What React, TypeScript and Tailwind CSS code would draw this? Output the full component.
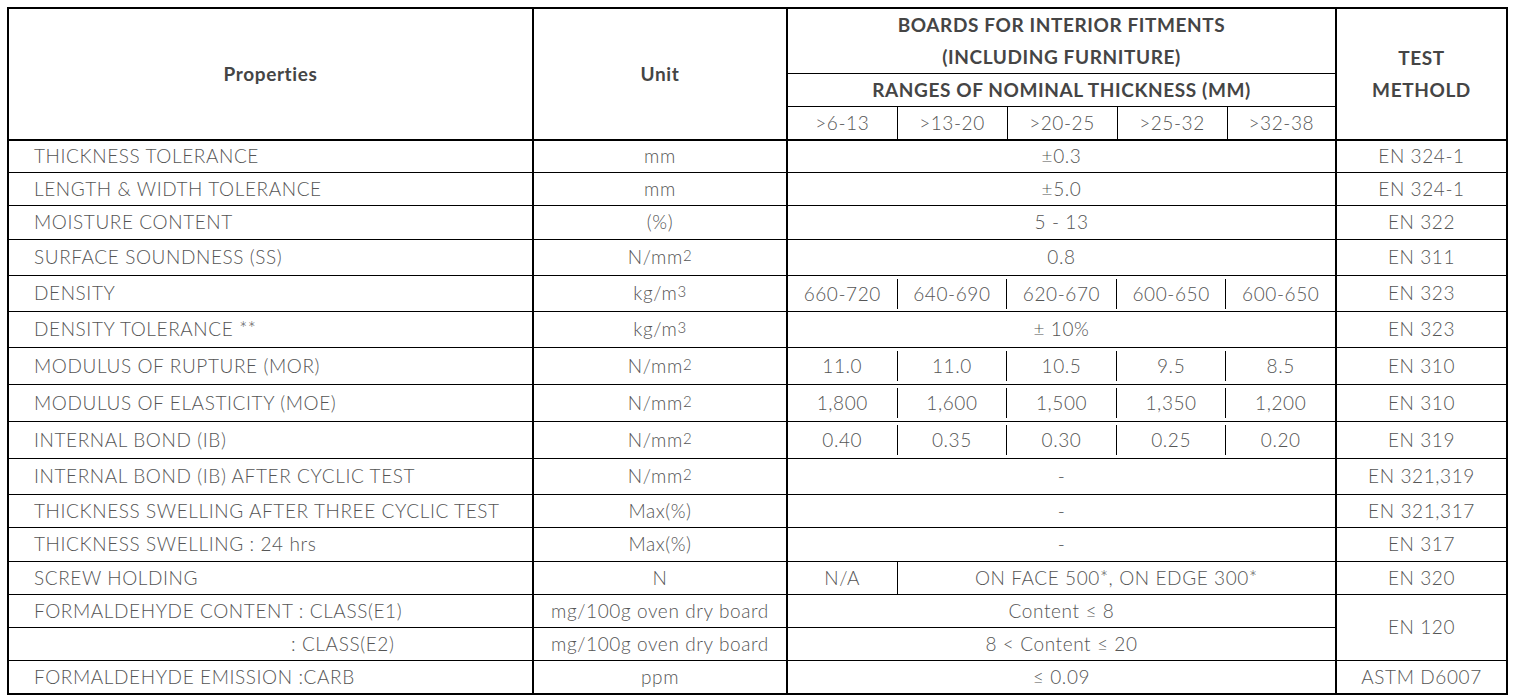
import React from 'react';

type Row = {
  name: string;
  unit: React.ReactNode;
  values: string[] | string;
  method?: string;
  h: number;
};

const N2 = (
  <>
    N/mm<sup className="text-[15px] relative -top-[3px]">2</sup>
  </>
);
const KG3 = (
  <>
    kg/m<sup className="text-[15px] relative -top-[3px]">3</sup>
  </>
);

const rows: Row[] = [
  { name: 'THICKNESS TOLERANCE', unit: 'mm', values: '±0.3', method: 'EN 324-1', h: 33 },
  { name: 'LENGTH & WIDTH TOLERANCE', unit: 'mm', values: '±5.0', method: 'EN 324-1', h: 33 },
  { name: 'MOISTURE CONTENT', unit: '(%)', values: '5 - 13', method: 'EN 322', h: 34 },
  { name: 'SURFACE SOUNDNESS (SS)', unit: N2, values: '0.8', method: 'EN 311', h: 36 },
  { name: 'DENSITY', unit: KG3, values: ['660-720', '640-690', '620-670', '600-650', '600-650'], method: 'EN 323', h: 36 },
  { name: 'DENSITY TOLERANCE **', unit: KG3, values: '± 10%', method: 'EN 323', h: 36 },
  { name: 'MODULUS OF RUPTURE (MOR)', unit: N2, values: ['11.0', '11.0', '10.5', '9.5', '8.5'], method: 'EN 310', h: 37 },
  { name: 'MODULUS OF ELASTICITY (MOE)', unit: N2, values: ['1,800', '1,600', '1,500', '1,350', '1,200'], method: 'EN 310', h: 37 },
  { name: 'INTERNAL BOND (IB)', unit: N2, values: ['0.40', '0.35', '0.30', '0.25', '0.20'], method: 'EN 319', h: 37 },
  { name: 'INTERNAL BOND (IB) AFTER CYCLIC TEST', unit: N2, values: '-', method: 'EN 321,319', h: 36 },
  { name: 'THICKNESS SWELLING AFTER THREE CYCLIC TEST', unit: 'Max(%)', values: '-', method: 'EN 321,317', h: 33 },
  { name: 'THICKNESS SWELLING : 24 hrs', unit: 'Max(%)', values: '-', method: 'EN 317', h: 34 },
];

const thick = 'border-2 border-black';

export default function App() {
  return (
    <div
      className="bg-white min-h-[698px] pt-[7px] pl-[7px] text-[#555] text-[19px] tracking-[0.6px]"
      style={{ fontFamily: 'Lato, "Open Sans", sans-serif' }}
    >
      <table className="border-collapse w-[1499px] table-fixed font-light">
        <colgroup>
          <col className="w-[525px]" />
          <col className="w-[254px]" />
          <col className="w-[110px]" />
          <col className="w-[110px]" />
          <col className="w-[110px]" />
          <col className="w-[110px]" />
          <col className="w-[109px]" />
          <col className="w-[171px]" />
        </colgroup>
        <thead className="font-bold text-[#454545] text-[19px]">
          <tr className="h-[61px]">
            <th rowSpan={3} className={`${thick} text-center font-bold`}>Properties</th>
            <th rowSpan={3} className={`${thick} text-center font-bold`}>Unit</th>
            <th colSpan={5} className={`${thick} border-b border-b-black leading-[32px] font-bold`}>
              BOARDS FOR INTERIOR FITMENTS
              <br />
              (INCLUDING FURNITURE)
            </th>
            <th rowSpan={3} className={`${thick} leading-[32px] font-bold`}>
              TEST
              <br />
              METHOLD
            </th>
          </tr>
          <tr className="h-[33px]">
            <th colSpan={5} className="border-x-2 border-x-black border-b border-b-black border-t border-t-black font-bold">
              RANGES OF NOMINAL THICKNESS (MM)
            </th>
          </tr>
          <tr className="h-[33px] text-[#555]">
            {['>6-13', '>13-20', '>20-25', '>25-32', '>32-38'].map((r, i) => (
              <th
                key={r}
                className={`font-light border-t border-t-black border-b-2 border-b-black ${
                  i === 0 ? 'border-l-2 border-l-black' : 'border-l border-l-black'
                } ${i === 4 ? 'border-r-2 border-r-black' : ''}`}
              >
                {r}
              </th>
            ))}
          </tr>
        </thead>
        <tbody>
          {rows.map((r) => (
            <tr key={r.name} style={{ height: r.h }} className="border-b border-black">
              <td className="border-l-2 border-l-black border-r-2 border-r-black pl-[25px] whitespace-nowrap">
                {r.name}
              </td>
              <td className="border-r-2 border-r-black text-center">{r.unit}</td>
              {typeof r.values === 'string' ? (
                <td colSpan={5} className="border-r-2 border-r-black text-center">
                  {r.values}
                </td>
              ) : (
                <td colSpan={5} className="border-r-2 border-r-black p-0">
                  <div className="flex items-stretch py-[2px]">
                    {r.values.map((v, i) => (
                      <div
                        key={i}
                        className={`text-center ${i === 4 ? 'w-[109px]' : 'w-[110px] border-r border-black'} leading-[30px]`}
                      >
                        {v}
                      </div>
                    ))}
                  </div>
                </td>
              )}
              <td className="border-r-2 border-r-black text-center">{r.method}</td>
            </tr>
          ))}
          <tr className="h-[33px] border-b border-black">
            <td className="border-l-2 border-l-black border-r-2 border-r-black pl-[25px]">SCREW HOLDING</td>
            <td className="border-r-2 border-r-black text-center">N</td>
            <td className="border-r border-r-black text-center">N/A</td>
            <td colSpan={4} className="border-r-2 border-r-black text-center">
              ON FACE 500*, ON EDGE 300*
            </td>
            <td className="border-r-2 border-r-black text-center">EN 320</td>
          </tr>
          <tr className="h-[33px] border-b border-black">
            <td className="border-l-2 border-l-black border-r-2 border-r-black pl-[25px] whitespace-nowrap">
              FORMALDEHYDE CONTENT : CLASS(E1)
            </td>
            <td className="border-r-2 border-r-black text-center whitespace-nowrap">mg/100g oven dry board</td>
            <td colSpan={5} className="border-r-2 border-r-black text-center">
              Content ≤ 8
            </td>
            <td rowSpan={2} className="border-r-2 border-r-black text-center">EN 120</td>
          </tr>
          <tr className="h-[33px] border-b border-black">
            <td className="border-l-2 border-l-black border-r-2 border-r-black pl-[282px]">: CLASS(E2)</td>
            <td className="border-r-2 border-r-black text-center whitespace-nowrap">mg/100g oven dry board</td>
            <td colSpan={5} className="border-r-2 border-r-black text-center">
              8 &lt; Content ≤ 20
            </td>
          </tr>
          <tr className="h-[33px] border-b-2 border-black">
            <td className="border-l-2 border-l-black border-r-2 border-r-black pl-[25px]">
              FORMALDEHYDE EMISSION :CARB
            </td>
            <td className="border-r-2 border-r-black text-center">ppm</td>
            <td colSpan={5} className="border-r-2 border-r-black text-center">
              ≤ 0.09
            </td>
            <td className="border-r-2 border-r-black text-center">ASTM D6007</td>
          </tr>
        </tbody>
      </table>
    </div>
  );
}
